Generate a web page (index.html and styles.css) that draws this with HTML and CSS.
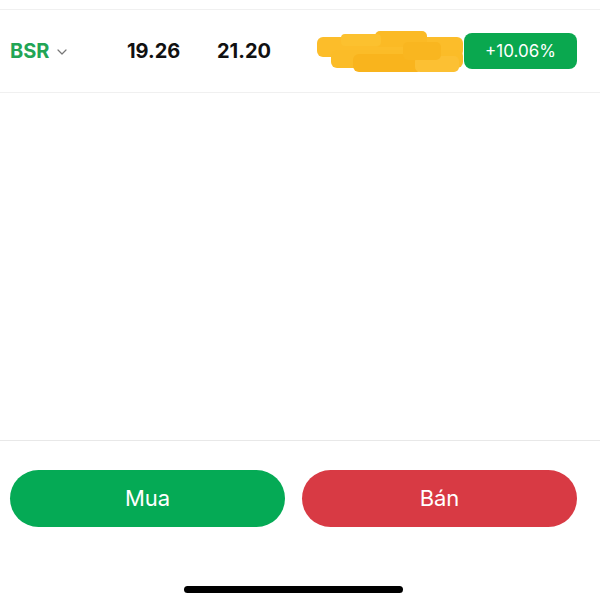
FILE: index.html
```html
<!DOCTYPE html>
<html lang="vi">
<head>
  <meta charset="UTF-8">
  <title>BSR</title>
  <link rel="stylesheet" href="styles.css">
</head>
<body>

<div class="screen">
  <!--dòng mã chứng khoán-->
  <div class="quote">
    <div class="symbol">
      BSR
      <svg class="chevron" width="10" height="6" viewBox="0 0 10 6">
        <path d="M1 1 L5 5 L9 1" fill="none" stroke="#777" stroke-width="1.2" stroke-linecap="round" stroke-linejoin="round"/>
      </svg>
    </div>
    <div class="price">19.26</div>
    <div class="price">21.20</div>
    <!--vệt che màu vàng-->
    <svg class="mask" width="148" height="46" viewBox="0 0 148 46">
      <rect x="0" y="7" width="146" height="20" rx="6" fill="#fcbd2a"/>
      <rect x="58" y="1" width="52" height="16" rx="5" fill="#fbba25"/>
      <rect x="24" y="4" width="40" height="12" rx="4" fill="#fcc12f"/>
      <rect x="14" y="20" width="132" height="18" rx="6" fill="#fbbc28"/>
      <rect x="36" y="24" width="70" height="18" rx="6" fill="#f9b41d"/>
      <rect x="98" y="26" width="44" height="16" rx="5" fill="#fcc033"/>
      <rect x="86" y="12" width="38" height="18" rx="5" fill="#f9b620"/>
    </svg>
    <div class="change">+10.06%</div>
  </div>

  <div class="empty"></div>

  <div class="actions">
    <a href="#" class="btn buy">Mua</a>
    <a href="#" class="btn sell">Bán</a>
  </div>

  <div class="home-bar"></div>
</div>

</body>
</html>
```

FILE: styles.css
```css
* {
  margin: 0;
  padding: 0;
  box-sizing: border-box;
}

body {
  background-color: #fff;
  font-family: Inter, "Liberation Sans", sans-serif;
}

.screen {
  width: 600px;
  height: 600px;
  padding-top: 9px;
  display: flex;
  flex-direction: column;
}

.quote {
  height: 84px;
  border-top: 1px solid #f0f0f0;
  border-bottom: 1px solid #f0f0f0;
  display: flex;
  align-items: center;
  padding-left: 10px;
}

.symbol {
  width: 117px;
  display: flex;
  align-items: center;
  color: #22a555;
  font-size: 20px;
  font-weight: 700;
}

.chevron {
  margin-left: 8px;
  margin-top: 1px;
}

.price {
  width: 90px;
  color: #111;
  font-size: 20px;
  font-weight: 700;
}

.price + .price {
  width: 100px;
}

.mask {
  margin-top: 4px;
  margin-right: -1px;
}

.change {
  width: 113px;
  height: 36px;
  border-radius: 8px;
  background-color: #0aa84f;
  color: #fff;
  font-size: 17px;
  text-align: center;
  line-height: 36px;
}

.empty {
  height: 348px;
  border-bottom: 1px solid #e8e8e8;
}

.actions {
  display: flex;
  gap: 17px;
  padding: 29px 23px 0 10px;
}

.btn {
  flex: 1;
  height: 57px;
  border-radius: 29px;
  color: #fff;
  text-decoration: none;
  text-align: center;
  font-size: 22px;
  line-height: 57px;
}

.buy {
  background-color: #05aa55;
}

.sell {
  background-color: #d83a44;
}

.home-bar {
  width: 219px;
  height: 7px;
  margin: 59px 0 0 184px;
  border-radius: 4px;
  background-color: #000;
}
```
